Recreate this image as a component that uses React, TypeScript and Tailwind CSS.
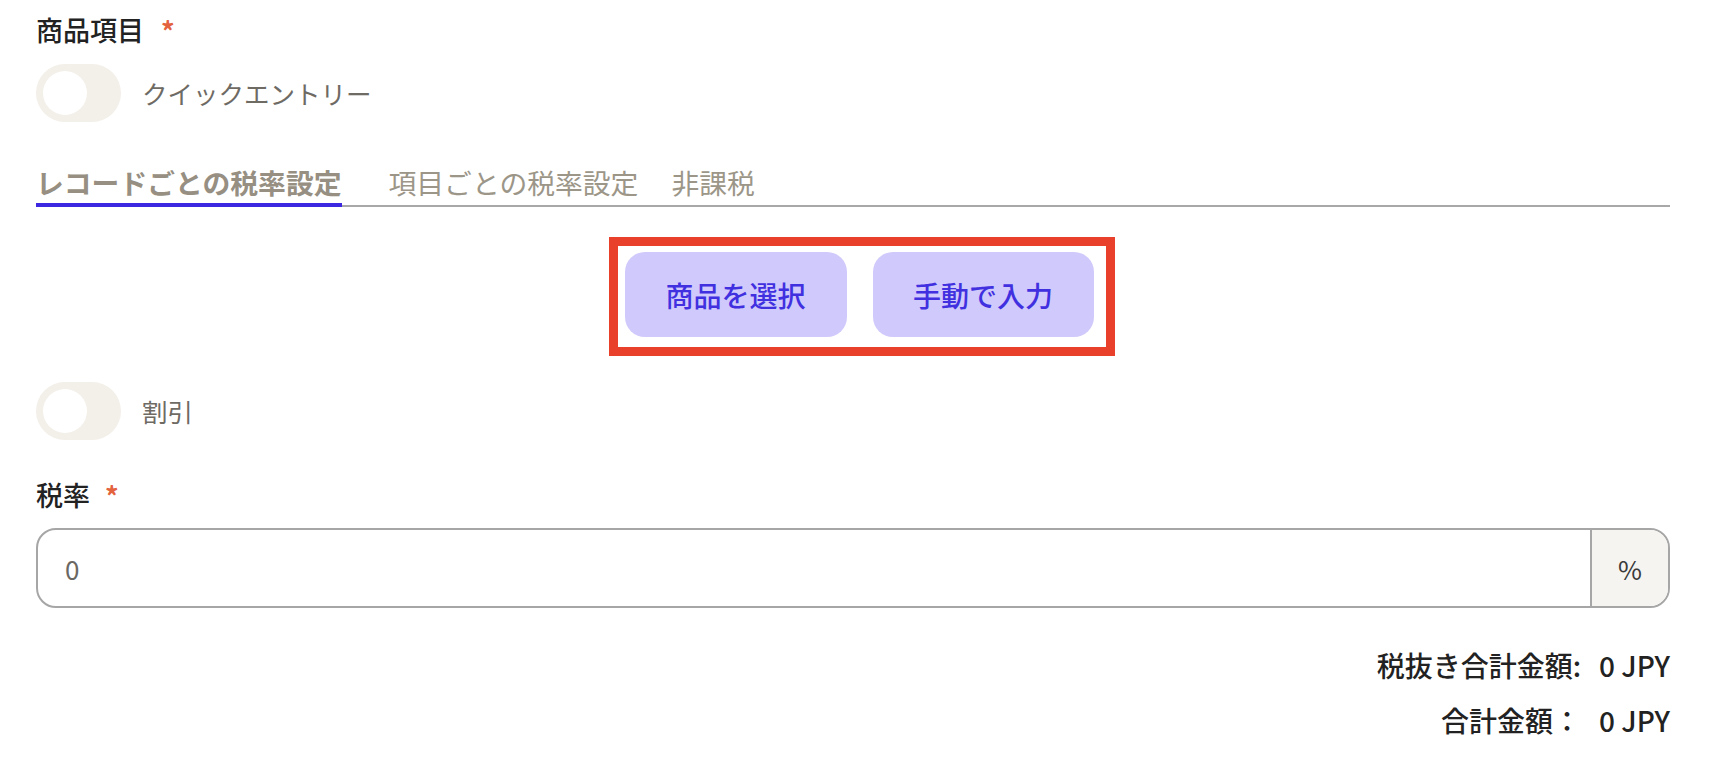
import type { ReactNode } from "react";

function Toggle({ label }: { label: string }) {
  return (
    <div className="flex items-center">
      <div className="flex h-[58px] w-[85px] items-center rounded-full bg-[#f3efe9] px-[7px]">
        <div className="h-[44px] w-[44px] rounded-full bg-white" />
      </div>
      <span className="ml-[21px] text-[25.5px] leading-[36px] text-[#6e6a64]">{label}</span>
    </div>
  );
}

function Required({ children, gap }: { children: ReactNode; gap: string }) {
  return (
    <div className="flex items-start">
      <span className="text-[27px] font-medium leading-[36px] text-[#222222]">{children}</span>
      <span className={`${gap} mt-[7px] text-[27px] font-bold leading-[24px] text-[#e4633f]`}>*</span>
    </div>
  );
}

export default function App() {
  return (
    <div className="min-h-screen bg-white pl-[36px] pr-[58px] pt-[12px] font-['Noto_Sans_CJK_JP','Noto_Sans',sans-serif]">
      <Required gap="ml-[17px]">商品項目</Required>

      <div className="mt-[16px]">
        <Toggle label="クイックエントリー" />
      </div>

      {/* tabs */}
      <div className="mt-[42px] flex border-b-2 border-[#a8a8a8]">
        <button
          type="button"
          className="-mb-[2px] border-b-4 border-[#3b28e0] pb-[3px] text-[27.8px] font-bold leading-[36px] text-[#968f82]"
        >
          レコードごとの税率設定
        </button>
        <button
          type="button"
          className="-mb-[2px] ml-[47px] pb-[7px] text-[27.8px] leading-[36px] text-[#9c9688]"
        >
          項目ごとの税率設定
        </button>
        <button
          type="button"
          className="-mb-[2px] ml-[33px] pb-[7px] text-[27.8px] leading-[36px] text-[#9c9688]"
        >
          非課税
        </button>
      </div>

      {/* product buttons */}
      <div className="mt-[30px] flex justify-center pl-[17px]">
        <div className="flex gap-[26px] border-[9px] border-[#e8402a] pb-[10px] pl-[7px] pr-[12px] pt-[6px]">
          <button
            type="button"
            className="h-[85px] w-[222px] rounded-[20px] bg-[#d0c9fb] text-[28px] font-medium text-[#4030e0]"
          >
            商品を選択
          </button>
          <button
            type="button"
            className="h-[85px] w-[221px] rounded-[20px] bg-[#d0c9fb] text-[28px] font-medium text-[#4030e0]"
          >
            手動で入力
          </button>
        </div>
      </div>

      <div className="mt-[26px]">
        <Toggle label="割引" />
      </div>

      <div className="mt-[37px]">
        <Required gap="ml-[15px]">税率</Required>
      </div>

      <div className="mt-[15px] flex h-[80px] overflow-hidden rounded-[20px] border-2 border-[#a6a6a6]">
        <div className="flex flex-1 items-center pl-[27px] text-[26px] text-[#6b6862]">0</div>
        <div className="flex w-[78px] items-center justify-center border-l-2 border-[#a6a6a6] bg-[#f5f4f1] text-[26px] text-[#3a3a3a]">
          %
        </div>
      </div>

      <div className="mt-[39px] flex flex-col items-end gap-[19px] text-[28px] font-medium leading-[36px] text-[#222222]">
        <div className="flex gap-[18px]">
          <span>税抜き合計金額:</span>
          <span>0 JPY</span>
        </div>
        <div className="flex gap-[18px]">
          <span>合計金額：</span>
          <span>0 JPY</span>
        </div>
      </div>
    </div>
  );
}
